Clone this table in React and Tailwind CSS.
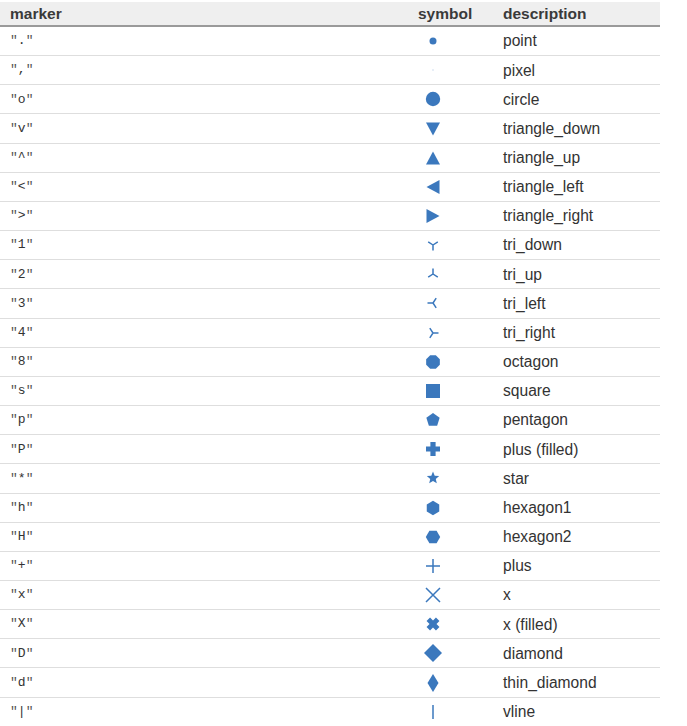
const C = '#3b78bd'

function Icon({ children, w = 30, h = 22 }) {
  return (
    <svg width={w} height={h} viewBox="-15 -11 30 22" aria-hidden="true">
      {children}
    </svg>
  )
}

function poly(n, r, rot = -90) {
  const pts = []
  for (let i = 0; i < n; i++) {
    const a = ((rot + (360 / n) * i) * Math.PI) / 180
    pts.push(`${(r * Math.cos(a)).toFixed(2)},${(r * Math.sin(a)).toFixed(2)}`)
  }
  return pts.join(' ')
}

function star(r, ri) {
  const pts = []
  for (let i = 0; i < 10; i++) {
    const a = ((-90 + 36 * i) * Math.PI) / 180
    const rr = i % 2 === 0 ? r : ri
    pts.push(`${(rr * Math.cos(a)).toFixed(2)},${(rr * Math.sin(a)).toFixed(2)}`)
  }
  return pts.join(' ')
}

const line = { stroke: C, strokeWidth: 1.5, fill: 'none', strokeLinecap: 'butt' }

const symbols = {
  point: <circle cx="0" cy="0" r="3.5" fill={C} />,
  pixel: <rect x="-0.5" y="-0.5" width="1" height="1" fill="#9fbde0" />,
  circle: <circle cx="0" cy="0" r="7.2" fill={C} />,
  triangle_down: <polygon points="-7,-6.5 7,-6.5 0,6.5" fill={C} />,
  triangle_up: <polygon points="-7,6.5 7,6.5 0,-6.5" fill={C} />,
  triangle_left: <polygon points="6.5,-7 6.5,7 -6.5,0" fill={C} />,
  triangle_right: <polygon points="-6.5,-7 -6.5,7 6.5,0" fill={C} />,
  tri_down: <path d="M0 0V5.5M0 0L-4.8 -3.2M0 0L4.8 -3.2" {...line} />,
  tri_up: <path d="M0 0V-5.5M0 0L-4.8 3.2M0 0L4.8 3.2" {...line} />,
  tri_left: <path d="M0 0H-5.5M0 0L3.2 -4.8M0 0L3.2 4.8" {...line} />,
  tri_right: <path d="M0 0H5.5M0 0L-3.2 -4.8M0 0L-3.2 4.8" {...line} />,
  octagon: <polygon points={poly(8, 7.4, -67.5)} fill={C} />,
  square: <rect x="-7" y="-7" width="14" height="14" fill={C} />,
  pentagon: <polygon points={poly(5, 7)} fill={C} />,
  plus_filled: <path d="M-2.6 -7H2.6V-2.6H7V2.6H2.6V7H-2.6V2.6H-7V-2.6H-2.6Z" fill={C} />,
  star: <polygon points={star(6.5, 2.9)} fill={C} />,
  hexagon1: <polygon points={poly(6, 7.2)} fill={C} />,
  hexagon2: <polygon points={poly(6, 7.2, 0)} fill={C} />,
  plus: <path d="M0 -7V7M-7 0H7" {...line} />,
  x: <path d="M-7 -7L7 7M7 -7L-7 7" {...line} />,
  x_filled: (
    <path
      d="M-2.6 -7H2.6V-2.6H7V2.6H2.6V7H-2.6V2.6H-7V-2.6H-2.6Z"
      fill={C}
      transform="rotate(45) scale(0.95)"
    />
  ),
  diamond: <polygon points="0,-9 9,0 0,9 -9,0" fill={C} />,
  thin_diamond: <polygon points="0,-9 5.5,0 0,9 -5.5,0" fill={C} />,
  vline: <path d="M0 -7V7" {...line} />,
}

const rows = [
  ['.', 'point', 'point'],
  [',', 'pixel', 'pixel'],
  ['o', 'circle', 'circle'],
  ['v', 'triangle_down', 'triangle_down'],
  ['^', 'triangle_up', 'triangle_up'],
  ['<', 'triangle_left', 'triangle_left'],
  ['>', 'triangle_right', 'triangle_right'],
  ['1', 'tri_down', 'tri_down'],
  ['2', 'tri_up', 'tri_up'],
  ['3', 'tri_left', 'tri_left'],
  ['4', 'tri_right', 'tri_right'],
  ['8', 'octagon', 'octagon'],
  ['s', 'square', 'square'],
  ['p', 'pentagon', 'pentagon'],
  ['P', 'plus_filled', 'plus (filled)'],
  ['*', 'star', 'star'],
  ['h', 'hexagon1', 'hexagon1'],
  ['H', 'hexagon2', 'hexagon2'],
  ['+', 'plus', 'plus'],
  ['x', 'x', 'x'],
  ['X', 'x_filled', 'x (filled)'],
  ['D', 'diamond', 'diamond'],
  ['d', 'thin_diamond', 'thin_diamond'],
  ['|', 'vline', 'vline'],
]

export default function App() {
  return (
    <div className="min-h-[726px] bg-white pt-[2px] font-['Liberation_Sans',Arial,sans-serif] text-[#333]">
      <div className="w-[660px]">
        <div className="flex h-[25px] items-center border-b-2 border-[#9a9a9a] bg-[#efefef] text-[15.5px] font-bold text-[#3a3a3a]">
          <div className="w-[410px] pl-[10px]">marker</div>
          <div className="w-[85px] pl-[8px]">symbol</div>
          <div className="flex-1 pl-[8px]">description</div>
        </div>
        {rows.map(([m, key, desc]) => (
          <div key={key} className="flex h-[29.17px] items-center border-b border-[#dedede]">
            <div className="w-[410px] pl-[10px] font-['Liberation_Mono',monospace] text-[13px] text-[#555]">
              "<span className="text-[#333]">{m}</span>"
            </div>
            <div className="flex w-[85px] items-center pl-[8px]">
              <Icon>{symbols[key]}</Icon>
            </div>
            <div className="flex-1 pl-[8px] text-[15.6px]">{desc}</div>
          </div>
        ))}
      </div>
    </div>
  )
}
